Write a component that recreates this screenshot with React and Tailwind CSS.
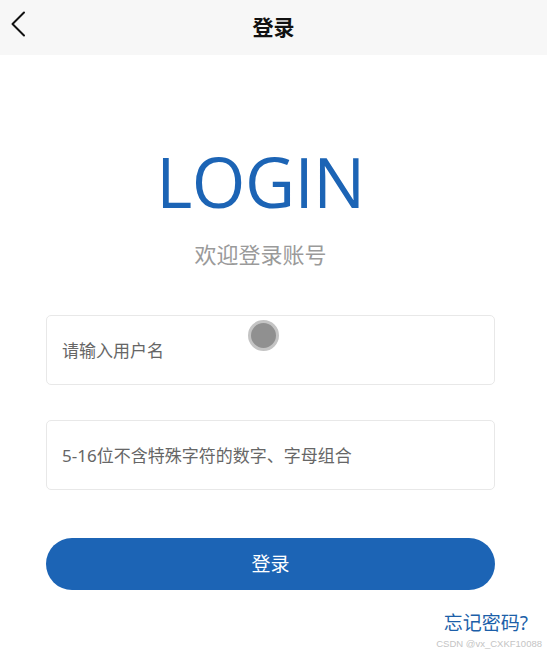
export default function App() {
  const font = { fontFamily: '"Noto Sans", "Noto Sans CJK SC", sans-serif' };
  return (
    <div className="relative flex min-h-[655px] w-full flex-col bg-white" style={font}>
      {/* header */}
      <div className="relative flex h-[55px] items-center justify-center bg-[#f7f7f7]">
        <button className="absolute left-[8px] top-[10px] flex h-[28px] w-[20px] items-center justify-center">
          <svg width="16" height="26" viewBox="0 0 16 26" fill="none" stroke="#111" strokeWidth="2" strokeLinecap="round" strokeLinejoin="round">
            <path d="M14 1.5 L2.5 13 L14 24.5" />
          </svg>
        </button>
        <h1 className="text-[21px] font-bold text-[#111]">登录</h1>
      </div>

      {/* title */}
      <div className="flex flex-col items-center pr-[26px] pt-[81px]">
        <div className="text-[69px] leading-[90px] tracking-[-0.5px] text-[#1c64b5]" style={{ fontFamily: '"Open Sans", sans-serif' }}>LOGIN</div>
        <div className="mt-[13px] text-[22px] leading-[30px] text-[#9a9a9a]">欢迎登录账号</div>
      </div>

      {/* form */}
      <div className="flex flex-col pl-[46px] pr-[52px] pt-[46px]">
        <div className="relative">
          <input
            type="text"
            placeholder="请输入用户名"
            className="h-[70px] w-full rounded-[5px] border border-[#e8e8e8] px-[15px] text-[17px] text-[#333] outline-none placeholder:text-[#666]"
          />
          <span className="absolute left-[202px] top-[5px] h-[31px] w-[31px] rounded-full border-[3px] border-[#c4c4c4] bg-[#909090]" />
        </div>
        <input
          type="password"
          placeholder="5-16位不含特殊字符的数字、字母组合"
          className="mt-[35px] h-[70px] w-full rounded-[5px] border border-[#e8e8e8] px-[15px] text-[17px] text-[#333] outline-none placeholder:text-[#666]"
        />
        <button className="mt-[48px] h-[52px] w-full rounded-full bg-[#1c64b5] text-[19px] text-white">登录</button>
      </div>

      <div className="flex justify-end pr-[19px] pt-[20px]">
        <a className="text-[19px] leading-[26px] text-[#1c5fa9]">忘记密码?</a>
      </div>
      <div className="flex justify-end pr-[5px] pt-[2px]">
        <span className="text-[9.5px] leading-[12px] text-[#c4c4c4]" style={{ fontFamily: '"Liberation Sans", sans-serif' }}>CSDN @vx_CXKF10088</span>
      </div>
    </div>
  );
}
